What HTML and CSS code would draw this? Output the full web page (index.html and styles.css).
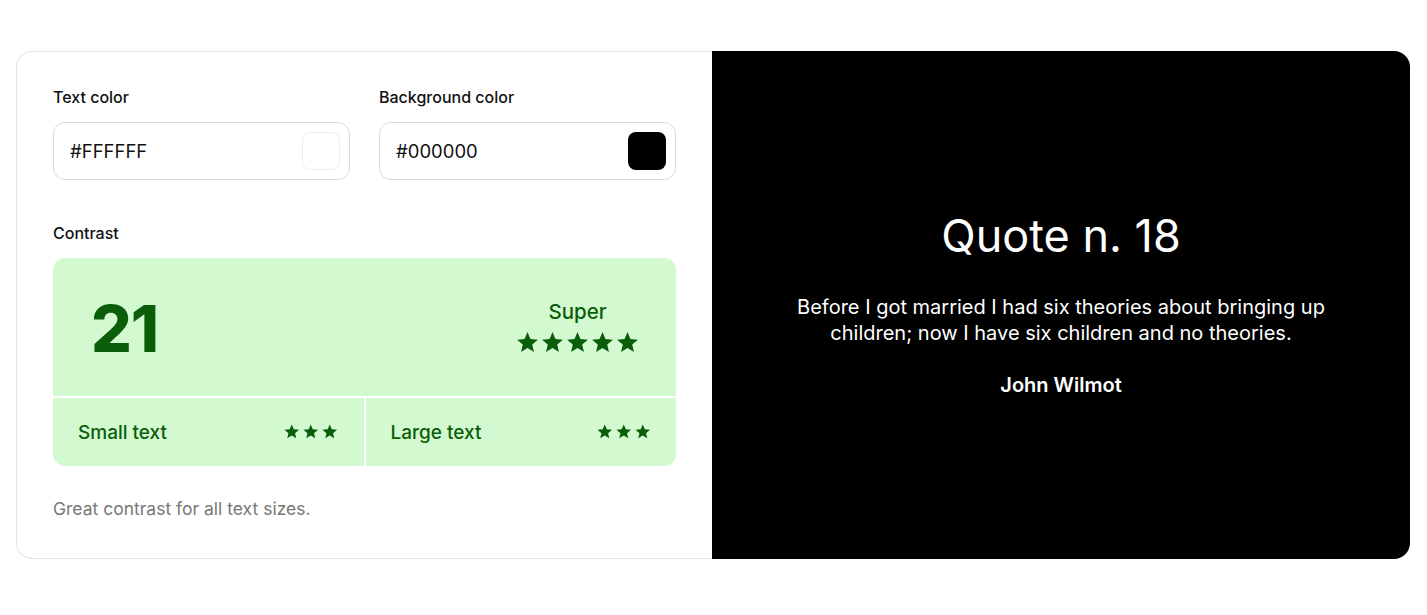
FILE: index.html
```html
<!DOCTYPE html>
<html lang="en">
<head>
<meta charset="utf-8">
<title>Contrast checker</title>
<link rel="stylesheet" href="styles.css">
</head>
<body>
<svg width="0" height="0" class="defs" aria-hidden="true">
  <defs>
    <symbol id="star" viewBox="0 0 24 24"><path d="M12 17.27L18.18 21l-1.64-7.03L22 9.24l-7.19-.61L12 2 9.19 8.63 2 9.24l5.46 4.73L5.82 21z"/></symbol>
  </defs>
</svg>
<main class="card">
  <section class="controls">
    <div class="fields">
      <div class="field">
        <label class="label">Text color</label>
        <div class="input">
          <span class="value">#FFFFFF</span>
          <span class="swatch swatch-white"></span>
        </div>
      </div>
      <div class="field">
        <label class="label">Background color</label>
        <div class="input">
          <span class="value">#000000</span>
          <span class="swatch swatch-black"></span>
        </div>
      </div>
    </div>
    <div class="label contrast-label">Contrast</div>
    <div class="score">
      <div class="score-top">
        <div class="ratio">21</div>
        <div class="rating">
          <div class="rating-text">Super</div>
          <div class="stars stars-big">
            <svg><use href="#star"/></svg><svg><use href="#star"/></svg><svg><use href="#star"/></svg><svg><use href="#star"/></svg><svg><use href="#star"/></svg>
          </div>
        </div>
      </div>
      <div class="score-bottom">
        <div class="cell">
          <span>Small text</span>
          <div class="stars stars-small"><svg><use href="#star"/></svg><svg><use href="#star"/></svg><svg><use href="#star"/></svg></div>
        </div>
        <div class="cell">
          <span>Large text</span>
          <div class="stars stars-small"><svg><use href="#star"/></svg><svg><use href="#star"/></svg><svg><use href="#star"/></svg></div>
        </div>
      </div>
    </div>
    <p class="note">Great contrast for all text sizes.</p>
  </section>
  <section class="preview">
    <h1 class="title">Quote n. 18</h1>
    <p class="quote">Before I got married I had six theories about bringing up children; now I have six children and no theories.</p>
    <p class="author">John Wilmot</p>
  </section>
</main>
</body>
</html>
```

FILE: styles.css
```css
* { box-sizing: border-box; }
html, body { margin: 0; background: #fff; }
body {
  font-family: Inter, "Noto Sans", sans-serif;
  color: #111;
  padding: 51px 17px 0 16px;
}
.defs { position: absolute; }
.card {
  display: flex;
  height: 508px;
}
.controls {
  flex: 0 0 696px;
  border: 1px solid #e3e3e3;
  border-right: none;
  border-radius: 16px 0 0 16px;
  padding: 35px 36px 0 36px;
}
.fields {
  display: flex;
  gap: 29px;
}
.field { flex: 1; }
.label {
  display: block;
  font-size: 16px;
  line-height: 20px;
  font-weight: 500;
  color: #111;
}
.input {
  margin-top: 15px;
  height: 58px;
  border: 1px solid #dadada;
  border-radius: 12px;
  display: flex;
  align-items: center;
  justify-content: space-between;
  padding: 0 9px 0 16px;
}
.value { font-size: 18.5px; color: #111; }
.swatch {
  width: 38px;
  height: 38px;
  border-radius: 8px;
}
.swatch-white { background: #fff; border: 1px solid #ececec; }
.swatch-black { background: #000; }
.contrast-label { margin-top: 43px; }
.score {
  margin-top: 15px;
  border-radius: 12px;
  overflow: hidden;
  background: #fff;
  color: #0b5e09;
  display: flex;
  flex-direction: column;
  gap: 2px;
}
.score-top {
  height: 138px;
  background: #d3f9d1;
  display: flex;
  align-items: center;
  justify-content: space-between;
  padding: 0 36px 0 38px;
}
.ratio {
  font-size: 64px;
  font-weight: 800;
  letter-spacing: -1px;
  line-height: 1;
  margin-top: 4px;
}
.rating {
  display: flex;
  flex-direction: column;
  align-items: center;
  gap: 6px;
}
.rating-text { font-size: 20.5px; font-weight: 500; line-height: 24px; }
.stars { display: flex; fill: #0b5e09; }
.stars-big { gap: 0; }
.stars-big svg { width: 25px; height: 25px; }
.stars-small { gap: 1.5px; }
.stars-small svg { width: 17.5px; height: 17.5px; }
.score-bottom {
  display: flex;
  gap: 2px;
  height: 68px;
}
.cell {
  flex: 1;
  background: #d3f9d1;
  display: flex;
  align-items: center;
  justify-content: space-between;
  padding: 0 25px 0 25px;
  font-size: 19px;
  font-weight: 500;
}
.note {
  margin: 32px 0 0;
  font-size: 17.5px;
  color: #777;
}
.preview {
  flex: 1;
  background: #000;
  color: #fff;
  border-radius: 0 16px 16px 0;
  display: flex;
  flex-direction: column;
  align-items: center;
  justify-content: center;
  text-align: center;
  padding: 0 60px 5px;
}
.title {
  margin: 0;
  font-size: 45px;
  font-weight: 400;
  line-height: 54px;
}
.quote {
  margin: 31px 0 0;
  font-size: 20px;
  line-height: 26px;
  max-width: 560px;
}
.author {
  margin: 27px 0 0;
  font-size: 20px;
  font-weight: 600;
}
```
